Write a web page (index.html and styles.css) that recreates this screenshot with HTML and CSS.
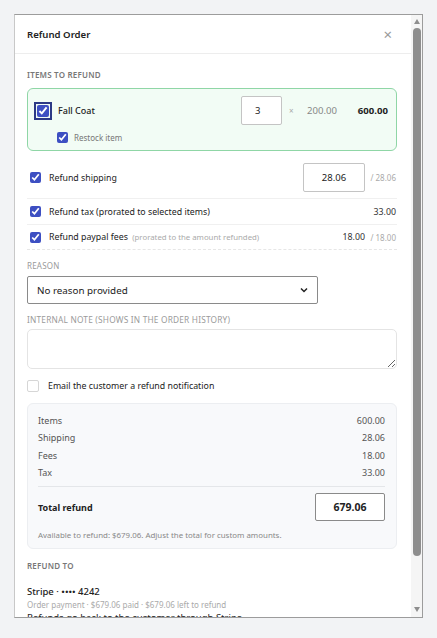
FILE: index.html
```html
<!DOCTYPE html>
<html lang="en">
<head>
    <meta charset="UTF-8">
    <meta name="viewport" content="width=device-width, initial-scale=1.0">
    <title>Refund Order</title>
    <link rel="stylesheet" href="styles.css">
</head>
<body>
    <div class="modal">
        <div class="modal-main">
            <div class="modal-header">
                <h1>Refund Order</h1>
                <span class="close">&times;</span>
            </div>

            <div class="modal-body">
                <div class="section-label strong">Items to refund</div>

                <div class="item-card">
                    <div class="item-row">
                        <input type="checkbox" class="check focus" checked>
                        <span class="item-name">Fall Coat</span>
                        <input type="text" class="qty" value="3">
                        <span class="times">&times;</span>
                        <span class="unit-price">200.00</span>
                        <span class="line-total">600.00</span>
                    </div>
                    <label class="restock">
                        <input type="checkbox" class="check" checked>
                        Restock item
                    </label>
                </div>

                <div class="option-row first">
                    <input type="checkbox" class="check" checked>
                    <span class="option-label">Refund shipping</span>
                    <input type="text" class="amount" value="28.06">
                    <span class="of">/ 28.06</span>
                </div>
                <div class="option-row">
                    <input type="checkbox" class="check" checked>
                    <span class="option-label">Refund tax (prorated to selected items)</span>
                    <span class="value">33.00</span>
                </div>
                <div class="option-row last">
                    <input type="checkbox" class="check" checked>
                    <span class="option-label">Refund paypal fees <small>(prorated to the amount refunded)</small></span>
                    <span class="value">18.00</span>
                    <span class="of">/ 18.00</span>
                </div>

                <div class="section-label">Reason</div>
                <div class="select">
                    <span>No reason provided</span>
                    <svg width="10" height="10" viewBox="0 0 10 10"><path d="M2 3.5 L5 6.5 L8 3.5" fill="none" stroke="#222" stroke-width="1.5"/></svg>
                </div>

                <div class="section-label">Internal note (shows in the order history)</div>
                <textarea class="note"></textarea>

                <label class="email-row">
                    <input type="checkbox" class="check empty">
                    Email the customer a refund notification
                </label>

                <div class="summary">
                    <div class="summary-row"><span>Items</span><span>600.00</span></div>
                    <div class="summary-row"><span>Shipping</span><span>28.06</span></div>
                    <div class="summary-row"><span>Fees</span><span>18.00</span></div>
                    <div class="summary-row"><span>Tax</span><span>33.00</span></div>
                    <div class="total-row">
                        <span>Total refund</span>
                        <input type="text" class="total-input" value="679.06">
                    </div>
                    <div class="available">Available to refund: $679.06. Adjust the total for custom amounts.</div>
                </div>

                <div class="section-label strong refund-to">Refund to</div>
                <div class="method">Stripe &middot; &bull;&bull;&bull;&bull; 4242</div>
                <div class="method-sub">Order payment &middot; $679.06 paid &middot; $679.06 left to refund</div>
                <div class="method-note">Refunds go back to the customer through Stripe.</div>
            </div>
        </div>

        <div class="scrollbar">
            <span class="arrow up"></span>
            <span class="thumb"></span>
            <span class="track"></span>
            <span class="arrow down"></span>
        </div>
    </div>
</body>
</html>
```

FILE: styles.css
```css
* {
    box-sizing: border-box;
}

body {
    font-family: 'Noto Sans', 'Open Sans', sans-serif;
    background-color: #f2f3f5;
    margin: 0;
    padding: 14px 0 0 14px;
    height: 638px;
    overflow: hidden;
    color: #222;
}

.modal {
    width: 409px;
    height: 604px;
    background-color: white;
    border: 1px solid #9c9c9c;
    border-left-color: #c8c8c8;
    display: flex;
    overflow: hidden;
}

.modal-main {
    flex: 1;
    min-width: 0;
}

.modal-header {
    height: 39px;
    padding: 0 19px 0 12px;
    border-bottom: 1px solid #ededed;
    display: flex;
    align-items: center;
    justify-content: space-between;
}

h1 {
    margin: 0;
    font-size: 9.6px;
    font-weight: 600;
}

.close {
    color: #999;
    font-size: 15px;
}

.modal-body {
    padding: 15px 14px 0 12px;
    font-size: 8.8px;
}

.section-label {
    font-size: 8px;
    text-transform: uppercase;
    color: #9a9a9a;
    line-height: 12px;
    letter-spacing: 0.2px;
}

.section-label.strong {
    font-weight: 600;
    color: #777;
}

.item-card {
    margin-top: 7px;
    border: 1px solid #8fd6a6;
    border-radius: 6px;
    background-color: #f2fcf5;
    padding: 7px 8px 7px 7px;
}

.item-row {
    display: flex;
    align-items: center;
    height: 29px;
}

.check {
    margin: 0;
    width: 11px;
    height: 11px;
    accent-color: #3d4fc2;
    flex: none;
}

.check.focus {
    width: 12px;
    height: 12px;
    margin: 0 2px;
    outline: 2px solid #2c3985;
    outline-offset: 1px;
    border-radius: 2px;
}

.item-name {
    flex: 1;
    margin-left: 7px;
    font-size: 9px;
    font-weight: 500;
}

input[type="text"] {
    font-family: inherit;
    border: 1px solid #c4c4c4;
    border-radius: 2px;
    background: white;
    color: #222;
    outline: none;
}

.qty {
    width: 41px;
    height: 29px;
    padding: 0 0 0 13px;
    font-size: 9.5px;
}

.times {
    width: 5px;
    color: #aaa;
    font-size: 8px;
    margin-left: 7px;
}

.unit-price {
    width: 28px;
    margin-left: 13px;
    color: #888;
    font-size: 9.6px;
}

.line-total {
    width: 53px;
    text-align: right;
    font-weight: 700;
    font-size: 9.6px;
}

.restock {
    display: flex;
    align-items: center;
    gap: 6px;
    margin: 6px 0 0 22px;
    height: 12px;
    font-size: 8px;
    color: #777;
}

.option-row {
    display: flex;
    align-items: center;
    padding: 0 1px 0 3px;
    height: 26px;
    border-bottom: 1px solid #f0f0f0;
}

.option-row.first {
    margin-top: 13px;
    height: 35px;
    padding-bottom: 7px;
}

.option-row.last {
    height: 25px;
    border-bottom: 1px dashed #e6e6e6;
}

.option-label {
    flex: 1;
    margin-left: 8px;
}

.option-label small {
    font-size: 7.8px;
    color: #aaa;
    margin-left: 2px;
}

.amount {
    width: 62px;
    height: 29px;
    text-align: center;
    font-size: 9.5px;
}

.of {
    width: 31px;
    text-align: right;
    font-size: 8px;
    color: #aaa;
}

.value {
    color: #333;
}

.option-row.last + .section-label {
    margin-top: 10px;
}

.select {
    margin-top: 4px;
    width: 291px;
    height: 28px;
    border: 1px solid #8a8a8a;
    border-radius: 2px;
    display: flex;
    align-items: center;
    justify-content: space-between;
    padding: 0 8px 0 9px;
    font-size: 9.8px;
}

.select + .section-label {
    margin-top: 10px;
    font-size: 8.3px;
}

.note {
    display: block;
    margin-top: 3px;
    width: 100%;
    height: 40px;
    border: 1px solid #e4e4e4;
    border-radius: 5px;
    resize: vertical;
    outline: none;
    font-family: inherit;
}

.email-row {
    display: flex;
    align-items: center;
    gap: 9px;
    margin-top: 10px;
    height: 13px;
}

.check.empty {
    appearance: none;
    width: 12px;
    height: 12px;
    border: 1px solid #d6d6d6;
    border-radius: 2px;
    background: white;
}

.summary {
    margin-top: 11px;
    border: 1px solid #eceef1;
    border-radius: 6px;
    background-color: #f8f9fb;
    padding: 8px 11px 7px 10px;
    color: #555;
    font-size: 9px;
}

.summary-row {
    display: flex;
    justify-content: space-between;
    line-height: 17.3px;
}

.total-row {
    display: flex;
    align-items: center;
    justify-content: space-between;
    margin-top: 5px;
    padding-top: 6px;
    border-top: 1px solid #e4e6e9;
    font-weight: 700;
    color: #222;
}

.total-input {
    width: 70px;
    height: 28px;
    text-align: center;
    font-size: 10.5px;
    font-weight: 700;
    border-color: #8a8a8a !important;
}

.available {
    margin-top: 8px;
    font-size: 7.9px;
    color: #888;
    line-height: 12px;
}

.refund-to {
    margin-top: 11px;
}

.method {
    margin-top: 13px;
    font-weight: 500;
    font-size: 9.5px;
    line-height: 13px;
}

.method-sub {
    font-size: 8px;
    color: #aaa;
    line-height: 13px;
}

.method-note {
    font-size: 9.5px;
    line-height: 14px;
}

.scrollbar {
    width: 11px;
    flex: none;
    background-color: #f5f5f5;
    display: flex;
    flex-direction: column;
    align-items: center;
}

.arrow {
    width: 0;
    height: 0;
    border-left: 3.5px solid transparent;
    border-right: 3.5px solid transparent;
}

.arrow.up {
    margin: 4px 0;
    border-bottom: 5px solid #8e8e8e;
}

.arrow.down {
    margin: 4px 0 5px;
    border-top: 5px solid #8e8e8e;
}

.thumb {
    width: 8px;
    height: 528px;
    border-radius: 4px;
    background-color: #8e8e8e;
}

.track {
    flex: 1;
}
```
